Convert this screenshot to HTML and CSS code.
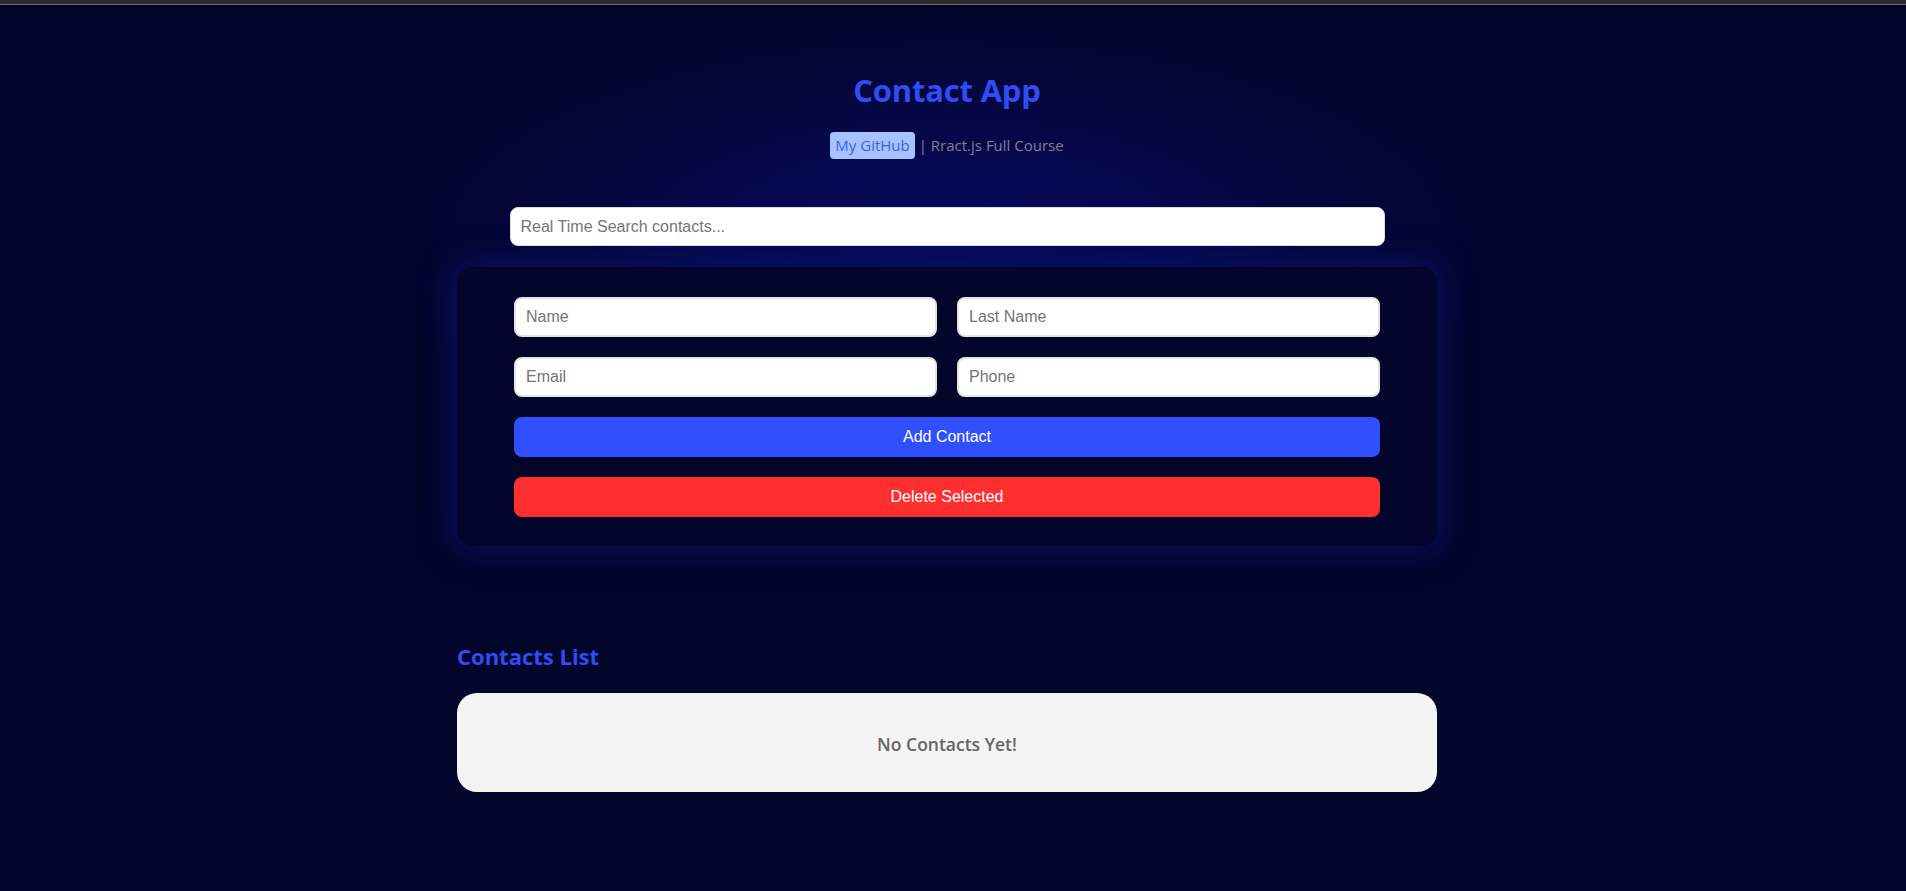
FILE: index.html
```html
<!DOCTYPE html>
<html lang="en">
<head>
<meta charset="utf-8">
<title>Contact App</title>
<link rel="stylesheet" href="styles.css">
</head>
<body>
<div class="topbar"></div>
<div class="page">
  <div class="app">
    <header class="header">
      <h1 class="title">Contact App</h1>
      <div class="links">
        <a class="badge" href="#">My GitHub</a>
        <span class="sep">| Rract.js Full Course</span>
      </div>
      <input class="search" type="text" placeholder="Real Time Search contacts...">
    </header>

    <section class="card">
      <div class="grid">
        <input class="field" type="text" placeholder="Name">
        <input class="field" type="text" placeholder="Last Name">
        <input class="field" type="text" placeholder="Email">
        <input class="field" type="text" placeholder="Phone">
      </div>
      <button class="btn btn-add">Add Contact</button>
      <button class="btn btn-delete">Delete Selected</button>
    </section>

    <h2 class="list-title">Contacts List</h2>
    <div class="list">
      <p class="empty">No Contacts Yet!</p>
    </div>
  </div>
</div>
</body>
</html>
```

FILE: styles.css
```css
* { box-sizing: border-box; }

html, body {
  margin: 0;
  padding: 0;
  background: #03052b;
  min-height: 100%;
}

body {
  font-family: "Open Sans", "Noto Sans", sans-serif;
  height: 891px;
  overflow: hidden;
}

.topbar {
  height: 5px;
  background: #2b2b2b;
  border-bottom: 1px solid #6c6c6c;
}

.page {
  padding-right: 12px;
  background: radial-gradient(ellipse 580px 230px at 947px 235px, #070a58 0%, #060850 35%, #04063a 70%, rgba(3, 5, 43, 0) 100%);
}

.app {
  width: 980px;
  margin: 0 auto;
}

.header {
  display: flex;
  flex-direction: column;
  align-items: center;
  padding-top: 65px;
}

.title {
  margin: 0;
  font-size: 31px;
  line-height: 40px;
  font-weight: 700;
  color: #2f4cf6;
  letter-spacing: -0.2px;
}

.links {
  margin-top: 21px;
  height: 27px;
  display: flex;
  align-items: center;
  gap: 4px;
  font-size: 15px;
  padding-top: 1px;
}

.badge {
  display: inline-flex;
  align-items: center;
  height: 27px;
  padding: 0 5px;
  border-radius: 4px;
  background: #a9c2ff;
  color: #3d5cf0;
  text-decoration: none;
}

.sep {
  color: #80808e;
}

.search {
  margin-top: 49px;
  width: 875px;
  height: 39px;
  padding: 0 10px;
  border: 1px solid #dcdcdc;
  border-radius: 8px;
  background: #fff;
  font-family: "Liberation Sans", Arial, sans-serif;
  font-size: 16px;
  outline: none;
}

.search::placeholder,
.field::placeholder {
  color: #757575;
}

.card {
  margin-top: 21px;
  padding: 30px 57px 29px;
  border-radius: 16px;
  background: #03052b;
  box-shadow: 0 0 30px 6px rgba(12, 18, 110, 0.7);
}

.grid {
  display: grid;
  grid-template-columns: 1fr 1fr;
  gap: 20px;
}

.field {
  width: 100%;
  height: 40px;
  padding: 0 10px;
  border: 2px solid #e4e4e4;
  border-radius: 8px;
  background: #fff;
  font-family: "Liberation Sans", Arial, sans-serif;
  font-size: 16px;
  outline: none;
}

.btn {
  display: block;
  width: 100%;
  height: 40px;
  margin-top: 20px;
  border: none;
  border-radius: 8px;
  color: #fff;
  font-family: "Liberation Sans", Arial, sans-serif;
  font-size: 16px;
  cursor: pointer;
}

.btn-add { background: #3050ff; }
.btn-delete { background: #ff2e2f; }

.list-title {
  margin: 95px 0 0;
  font-size: 22px;
  line-height: 30px;
  font-weight: 700;
  color: #2f4cf6;
}

.list {
  margin-top: 22px;
  height: 99px;
  border-radius: 20px;
  background: #f4f4f4;
  display: flex;
  align-items: center;
  justify-content: center;
}

.empty {
  margin: 2px 0 0;
  font-size: 17.5px;
  font-weight: 600;
  color: #666;
}
```
